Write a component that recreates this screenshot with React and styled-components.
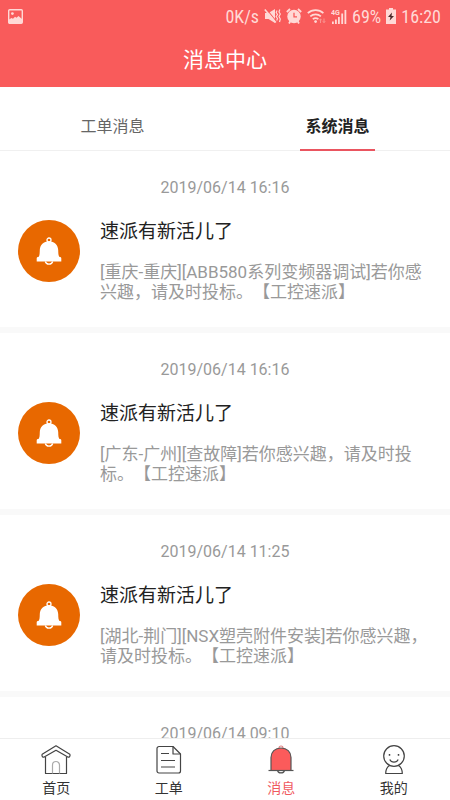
import React from "react";
import styled, { createGlobalStyle } from "styled-components";

const GlobalStyle = createGlobalStyle`
  * {
    box-sizing: border-box;
  }
  body {
    margin: 0;
    background: #fff;
    font-family: Roboto, "Noto Sans CJK SC", sans-serif;
    text-spacing-trim: space-all;
  }
  h1, h2, p {
    margin: 0;
    font-weight: 400;
  }
`;

const Page = styled.div`
  display: flex;
  flex-direction: column;
  height: 100vh;
`;

const Header = styled.header`
  flex: none;
  background: #f95b5b;
  color: #fff;
`;

const StatusBar = styled.div`
  display: flex;
  align-items: center;
  justify-content: space-between;
  height: 32px;
  padding: 0 9px 0 8px;
  color: #ffd9d6;
  font-family: "Roboto Condensed", Roboto, sans-serif;
  font-size: 18px;
`;

const StatusGroup = styled.div`
  display: flex;
  align-items: center;
  gap: 5px;
`;

const PageTitle = styled.h1`
  height: 55px;
  padding-top: 1px;
  line-height: 55px;
  font-size: 21px;
  text-align: center;
`;

const Tabs = styled.nav`
  display: flex;
  flex: none;
  height: 64px;
  border-bottom: 1px solid #f0f0f0;
`;

const TabCell = styled.div`
  display: flex;
  flex: 1;
  justify-content: center;
`;

const Tab = styled.button`
  width: 75px;
  margin-bottom: -1px;
  padding: 14px 0 0;
  border: 0;
  border-bottom: 2px solid ${({ $active }) => ($active ? "#ea5560" : "transparent")};
  background: none;
  color: ${({ $active }) => ($active ? "#222" : "#666")};
  font-family: inherit;
  font-size: 16px;
  font-weight: ${({ $active }) => ($active ? 700 : 400)};
  white-space: nowrap;
`;

const List = styled.main`
  flex: 1;
  min-height: 0;
  overflow: hidden;
`;

const Message = styled.article`
  padding: 27px 18px 25px;
  border-bottom: 6px solid #f9f9f9;
`;

const MessageTime = styled.time`
  display: block;
  color: #999;
  font-size: 16px;
  line-height: 20px;
  text-align: center;
`;

const MessageRow = styled.div`
  display: flex;
  gap: 20px;
  margin-top: 22px;
`;

const Avatar = styled.div`
  display: flex;
  flex: none;
  align-items: center;
  justify-content: center;
  width: 62px;
  height: 62px;
  border-radius: 50%;
  background: #e86800;
`;

const MessageTitle = styled.h2`
  color: #222;
  font-size: 19px;
  line-height: 24px;
`;

const MessageText = styled.p`
  margin-top: 18px;
  color: #999;
  font-size: 17px;
  line-height: 20px;
`;

const TabBar = styled.nav`
  display: flex;
  flex: none;
  height: 62px;
  border-top: 1px solid #eee;
  background: #fff;
`;

const TabBarItem = styled.a`
  display: flex;
  flex: 1;
  flex-direction: column;
  align-items: center;
  padding-top: 6px;
  color: ${({ $active }) => ($active ? "#f05a5f" : "#333")};
  font-size: 14px;
  line-height: 20px;
  text-decoration: none;

  svg {
    margin-bottom: 3px;
  }
`;

const PictureIcon = () => (
  <svg width="15" height="15" viewBox="0 0 15 15">
    <rect x="0.7" y="0.7" width="13.6" height="13.6" rx="1" fill="none" stroke="#ffd9d6" strokeWidth="1.4" />
    <circle cx="4.4" cy="4.6" r="1.4" fill="#ffd9d6" />
    <path d="M1 14V10.500l2.500-1.500 1.500.8 2-2 1.500 1L10.500 7l3.500 3v4z" fill="#ffd9d6" />
  </svg>
);

const MuteIcon = () => (
  <svg width="17" height="16" viewBox="0 0 17 16" fill="none" stroke="#ffd9d6">
    <path d="M1 5h3.500L11 1v14l-6.500-4H1z" fill="#ffd9d6" stroke="none" />
    <path d="M2 .5l10 12.500" stroke="#f95b5b" strokeWidth="1.2" />
    <path d="M.8 1.500l11 13" strokeWidth="1.6" />
    <path d="M13 2.500l-.8 2 1.300 2-1.300 2 1.300 2-.8 2M15.800 1.500l-.8 2.500 1.300 2-1.300 2.500 1.300 2.500-.8 3" strokeWidth="1.2" />
  </svg>
);

const AlarmIcon = () => (
  <svg width="16" height="16" viewBox="0 0 16 16" fill="none" stroke="#ffd9d6">
    <circle cx="8" cy="8.5" r="6.7" fill="#ffd9d6" stroke="none" />
    <path d="M.8 4l3.200-3M15.200 4L12 1M3 15.500L4.500 13M13 15.500L11.500 13" strokeWidth="1.8" />
    <path d="M8 4.800v4h3" stroke="#f95b5b" strokeWidth="1.3" />
  </svg>
);

const WifiIcon = () => (
  <svg width="19" height="16" viewBox="0 0 19 16" fill="none" stroke="#ffd9d6" strokeWidth="1.7">
    <path d="M.8 5.200a11.500 11.500 0 0 1 15.600 0M3.300 8.300a8 8 0 0 1 10.600 0M5.800 11.200a4.500 4.500 0 0 1 5.600 0" />
    <circle cx="8.6" cy="13.6" r="1.4" fill="#ffd9d6" stroke="none" />
    <path d="M13.500 15v-4M12.300 12.300l1.200-1.500 1.200 1.500M17 10.500v4M15.800 13.200l1.200 1.500 1.200-1.500" stroke="#fa9491" strokeWidth="1" />
  </svg>
);

const SignalIcon = () => (
  <svg width="16" height="15" viewBox="0 0 16 15" fill="#ffd9d6">
    <text x="0" y="6" fontFamily="Roboto, sans-serif" fontSize="7" fontWeight="700">4G</text>
    <path d="M1 12.500h1.800V15H1zM4 10.500h1.800V15H4zM7 8h1.800v7H7zM10.300 4.500h1.800V15h-1.800zM13.500 1h1.800v14h-1.800z" />
  </svg>
);

const BatteryIcon = () => (
  <svg width="10" height="16" viewBox="0 0 10 16">
    <path d="M3 0h4v1.500h3V16H0V1.500h3z" fill="#ffd9d6" />
    <path d="M6 4.500L2 9h2.500l-.8 3.500L8 8H5.500z" fill="#4a2a2a" />
  </svg>
);

const AvatarBell = () => (
  <svg width="26" height="29" viewBox="0 0 26 29" fill="none" stroke="#fff">
    <circle cx="13" cy="3" r="2" strokeWidth="1.3" />
    <path d="M9.300 24.500a3.800 3.400 0 0 0 7.400 0" strokeWidth="1.3" />
    <path d="M13 4.200C7.500 4.200 4 8 3.800 13c-.1 4-.2 5.500-1.300 7H1.700a1.200 1.200 0 0 0-1 1.200V24.500h24.600V21.200a1.200 1.200 0 0 0-1-1.200h-.8C22.400 18.500 22.300 17 22.200 13 22 8 18.500 4.200 13 4.200z" fill="#fff" stroke="none" />
  </svg>
);

const HomeIcon = () => (
  <svg width="30" height="30" viewBox="0 0 30 30" fill="none" stroke="#444" strokeWidth="1.2" strokeLinejoin="round">
    <path d="M15 .8L1.200 9.300c-.8 1.800.6 3.200 2 2.800L15 5.300l11.800 6.800c1.400.4 2.800-1 2-2.800z" />
    <path d="M4.500 12v16.500h21V12" />
    <path d="M11.500 28.500V20a3.500 3.500 0 0 1 7 0v8.500" stroke="#aaa" />
  </svg>
);

const OrderIcon = () => (
  <svg width="30" height="30" viewBox="0 0 30 30" fill="none" stroke="#444" strokeWidth="1.2" strokeLinejoin="round">
    <path d="M5 1.500h14l7.500 7.500V26a2 2 0 0 1-2 2H5a2 2 0 0 1-2-2V3.500a2 2 0 0 1 2-2z" />
    <path d="M19 1.500V9h7.500M7 8.500h8M7 15.500h14M7 22h14" />
  </svg>
);

const BellIcon = () => (
  <svg width="30" height="30" viewBox="0 0 30 30" fill="none" stroke="#555" strokeWidth="1.2">
    <path d="M13 3a2 2 0 0 1 4 0" stroke="#e08080" />
    <path d="M11.500 25.500a3.600 3.200 0 0 0 7 0" />
    <path d="M5 25.500V12.500C5 7 9 3 15 3s10 4 10 9.500v13z" fill="#fb5b5b" />
    <path d="M2.500 25.500h25" />
  </svg>
);

const UserIcon = () => (
  <svg width="30" height="30" viewBox="0 0 30 30" fill="none" stroke="#444" strokeWidth="1.2" strokeLinejoin="round">
    <circle cx="15" cy="11" r="10.300" />
    <path d="M10.800 14.500c1.500 3.400 6.900 3.400 8.400 0" />
    <path d="M10.500 9v1.800M19.500 9v1.800" strokeWidth="1.5" />
    <path d="M10.500 20.500c-2.200 1.500-3.800 4.500-3.800 8h16.600c0-3.500-1.600-6.500-3.800-8" />
  </svg>
);

const messages = [
  {
    id: 1,
    time: "2019/06/14 16:16",
    title: "速派有新活儿了",
    text: "[重庆-重庆][ABB580系列变频器调试]若你感兴趣，请及时投标。【工控速派】",
  },
  {
    id: 2,
    time: "2019/06/14 16:16",
    title: "速派有新活儿了",
    text: "[广东-广州][查故障]若你感兴趣，请及时投标。【工控速派】",
  },
  {
    id: 3,
    time: "2019/06/14 11:25",
    title: "速派有新活儿了",
    text: "[湖北-荆门][NSX塑壳附件安装]若你感兴趣，请及时投标。【工控速派】",
  },
  {
    id: 4,
    time: "2019/06/14 09:10",
  },
];

const tabs = [
  { name: "工单消息", active: false },
  { name: "系统消息", active: true },
];

const menus = [
  { name: "首页", Icon: HomeIcon, active: false },
  { name: "工单", Icon: OrderIcon, active: false },
  { name: "消息", Icon: BellIcon, active: true },
  { name: "我的", Icon: UserIcon, active: false },
];

const App = () => {
  return (
    <Page>
      <GlobalStyle />
      <Header>
        <StatusBar>
          <PictureIcon />
          <StatusGroup>
            <span>0K/s</span>
            <MuteIcon />
            <AlarmIcon />
            <WifiIcon />
            <SignalIcon />
            <span>69%</span>
            <BatteryIcon />
            <span>16:20</span>
          </StatusGroup>
        </StatusBar>
        <PageTitle>消息中心</PageTitle>
      </Header>

      <Tabs>
        {tabs.map((tab) => (
          <TabCell key={tab.name}>
            <Tab type="button" $active={tab.active}>{tab.name}</Tab>
          </TabCell>
        ))}
      </Tabs>

      <List>
        {messages.map((message) => (
          <Message key={message.id}>
            <MessageTime>{message.time}</MessageTime>
            {message.title && (
              <MessageRow>
                <Avatar>
                  <AvatarBell />
                </Avatar>
                <div>
                  <MessageTitle>{message.title}</MessageTitle>
                  <MessageText>{message.text}</MessageText>
                </div>
              </MessageRow>
            )}
          </Message>
        ))}
      </List>

      <TabBar>
        {menus.map(({ name, Icon, active }) => (
          <TabBarItem key={name} href="#" $active={active}>
            <Icon />
            {name}
          </TabBarItem>
        ))}
      </TabBar>
    </Page>
  );
};

export default App;
